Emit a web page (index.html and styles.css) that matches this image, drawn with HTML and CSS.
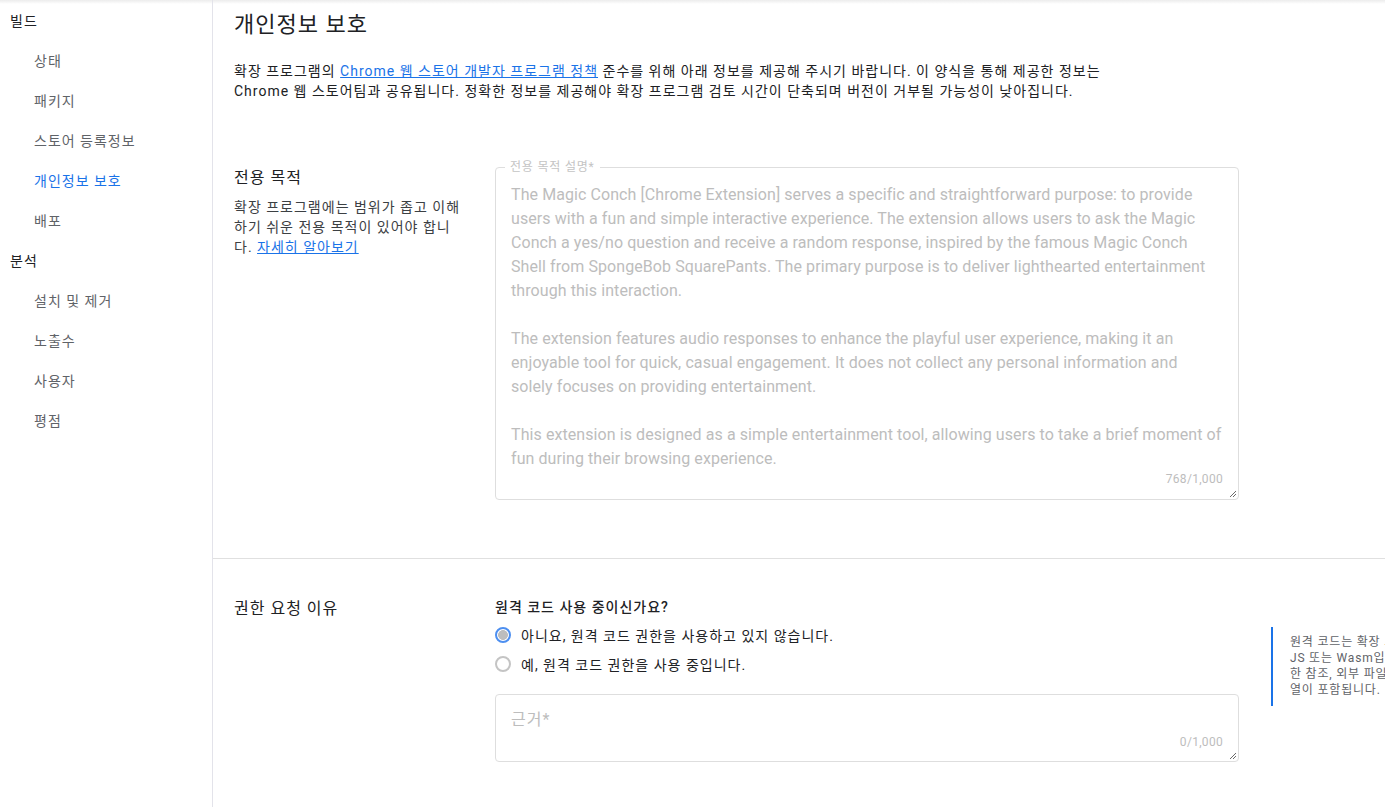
FILE: index.html
```html
<!DOCTYPE html>
<html lang="ko">
<head>
<meta charset="utf-8">
<title>개인정보 보호</title>
<link rel="stylesheet" href="styles.css">
</head>
<body>
<div class="layout">
  <nav class="sidebar">
    <div class="nav-head">빌드</div>
    <a class="nav-item">상태</a>
    <a class="nav-item">패키지</a>
    <a class="nav-item">스토어 등록정보</a>
    <a class="nav-item active">개인정보 보호</a>
    <a class="nav-item">배포</a>
    <div class="nav-head">분석</div>
    <a class="nav-item">설치 및 제거</a>
    <a class="nav-item">노출수</a>
    <a class="nav-item">사용자</a>
    <a class="nav-item">평점</a>
  </nav>
  <main class="main">
    <div class="page-head">
      <h1 class="page-title">개인정보 보호</h1>
      <p class="page-desc">확장 프로그램의 <a class="link" href="#">Chrome 웹 스토어 개발자 프로그램 정책</a> 준수를 위해 아래 정보를 제공해 주시기 바랍니다. 이 양식을 통해 제공한 정보는 Chrome 웹 스토어팀과 공유됩니다. 정확한 정보를 제공해야 확장 프로그램 검토 시간이 단축되며 버전이 거부될 가능성이 낮아집니다.</p>
    </div>

    <section class="sec sec-purpose">
      <div class="sec-grid">
        <div class="sec-left">
          <h2 class="sec-title">전용 목적</h2>
          <p class="sec-desc">확장 프로그램에는 범위가 좁고 이해하기 쉬운 전용 목적이 있어야 합니다. <a class="link" href="#">자세히 알아보기</a></p>
        </div>
        <fieldset class="field field-big">
          <legend class="field-label">전용 목적 설명*</legend>
          <div class="field-text">The Magic Conch [Chrome Extension] serves a specific and straightforward purpose: to provide users with a fun and simple interactive experience. The extension allows users to ask the Magic Conch a yes/no question and receive a random response, inspired by the famous Magic Conch Shell from SpongeBob SquarePants. The primary purpose is to deliver lighthearted entertainment through this interaction.

The extension features audio responses to enhance the playful user experience, making it an enjoyable tool for quick, casual engagement. It does not collect any personal information and solely focuses on providing entertainment.

This extension is designed as a simple entertainment tool, allowing users to take a brief moment of fun during their browsing experience.</div>
          <div class="field-count count-big">768/1,000</div>
          <svg class="grip" width="8" height="8" viewBox="0 0 8 8"><path d="M7 1L1 7M7 4L4 7" stroke="#6b6b6b" stroke-width="1"/></svg>
        </fieldset>
      </div>
    </section>

    <section class="sec sec-perm">
      <div class="sec-grid">
        <div class="sec-left">
          <h2 class="sec-title">권한 요청 이유</h2>
        </div>
        <div class="perm-body">
          <div class="question">원격 코드 사용 중이신가요?</div>
          <div class="radios">
            <label class="radio-row"><span class="radio checked"></span><span>아니요, 원격 코드 권한을 사용하고 있지 않습니다.</span></label>
            <label class="radio-row"><span class="radio"></span><span>예, 원격 코드 권한을 사용 중입니다.</span></label>
          </div>
          <div class="field field-small">
            <div class="placeholder">근거*</div>
            <div class="field-count">0/1,000</div>
            <svg class="grip" width="8" height="8" viewBox="0 0 8 8"><path d="M7 1L1 7M7 4L4 7" stroke="#6b6b6b" stroke-width="1"/></svg>
          </div>
        </div>
        <aside class="hint">원격 코드는 확장 프로그램 패키지에 포함<br>JS 또는 Wasm입니다. 여기에는 외부 파일에 대<br>한 참조, 외부 파일을 가리키는 모듈, 평가된 문자<br>열이 포함됩니다.</aside>
      </div>
    </section>
  </main>
</div>
</body>
</html>
```

FILE: styles.css
```css
html {
  overflow: hidden;
}
body {
  margin: 0;
  font-family: Roboto, "Noto Sans CJK KR", sans-serif;
  color: #202124;
  background: linear-gradient(#ececec 0, #fff 4px) no-repeat, #fff;
  width: 1385px;
  height: 807px;
  overflow: hidden;
  letter-spacing: 1px;
}
.layout {
  display: flex;
  min-height: 807px;
}
.sidebar {
  width: 212px;
  flex: none;
  border-right: 1px solid #e3e3ea;
  padding-top: 1px;
  display: flex;
  flex-direction: column;
}
.nav-head {
  height: 40px;
  line-height: 40px;
  padding-left: 10px;
  font-size: 14px;
  color: #202124;
}
.nav-item {
  height: 40px;
  line-height: 40px;
  padding-left: 34px;
  font-size: 14px;
  color: #5f6368;
  text-decoration: none;
}
.nav-item.active {
  color: #1a73e8;
}
.main {
  flex: 1;
  min-width: 0;
}
.page-head {
  padding: 9px 0 0 21px;
}
.page-title {
  margin: 0;
  font-size: 22px;
  line-height: 32px;
  font-weight: 400;
  color: #202124;
}
.page-desc {
  margin: 20px 0 0;
  width: 870px;
  font-size: 14px;
  line-height: 20px;
  color: #202124;
}
.link {
  color: #1a73e8;
  text-decoration: underline;
}
.sec {
  padding-left: 21px;
}
.sec-purpose {
  padding-top: 59px;
  padding-bottom: 58px;
  border-bottom: 1px solid #e0e0e0;
}
.sec-perm {
  padding-top: 38px;
}
.sec-grid {
  display: grid;
  grid-template-columns: 237px 744px auto;
  column-gap: 24px;
  align-items: start;
}
.sec-left {
  padding-top: 6px;
}
.sec-perm .sec-left {
  padding-top: 0;
}
.sec-title {
  margin: 0;
  font-size: 16px;
  line-height: 24px;
  font-weight: 400;
  color: #202124;
}
.sec-desc {
  margin: 7px 0 0;
  max-width: 230px;
  font-size: 14px;
  line-height: 20px;
  color: #3c4043;
}
.field {
  position: relative;
  margin: 0;
  border: 1px solid #dedede;
  border-radius: 4px;
  box-sizing: border-box;
  min-width: 0;
}
.field-big {
  padding: 9px 15px 12px;
}
.field-label {
  margin-left: -6px;
  padding: 0 5px;
  font-size: 12px;
  line-height: 14px;
  letter-spacing: 0.8px;
  color: #c4c4c4;
}
.field-text {
  white-space: pre-wrap;
  font-size: 16px;
  line-height: 24px;
  letter-spacing: 0.08px;
  color: #bdbdbd;
}
.field-count {
  text-align: right;
  font-size: 12px;
  line-height: 16px;
  letter-spacing: 0.3px;
  color: #bdbdbd;
}
.count-big {
  margin-top: 0;
}
.grip {
  position: absolute;
  right: 1px;
  bottom: 1px;
}
.perm-body {
  display: flex;
  flex-direction: column;
}
.question {
  font-size: 14px;
  line-height: 20px;
  font-weight: 500;
  color: #202124;
}
.radios {
  margin-top: 4px;
  display: flex;
  flex-direction: column;
}
.radio-row {
  display: flex;
  align-items: center;
  gap: 10px;
  height: 28px;
  font-size: 14px;
  color: #202124;
}
.radio-row + .radio-row {
  height: 29px;
}
.radio {
  width: 16px;
  height: 16px;
  box-sizing: border-box;
  border-radius: 50%;
  border: 2px solid #c4c4c4;
  background: #fff;
  flex: none;
}
.radio.checked {
  border-color: #4d8ff0;
  background: radial-gradient(circle, #bdbdbd 0 4.6px, #fff 5.2px);
}
.field-small {
  margin-top: 16px;
  padding: 13px 15px 11px;
}
.placeholder {
  font-size: 16px;
  line-height: 24px;
  color: #bdbdbd;
}
.field-small .field-count {
  margin-top: 2px;
}
.hint {
  margin-top: 30px;
  margin-left: 8px;
  border-left: 2px solid #1a73e8;
  padding: 7px 0 8px 17px;
  white-space: nowrap;
  font-size: 12px;
  line-height: 16px;
  letter-spacing: 0.8px;
  color: #5f6368;
}
```
